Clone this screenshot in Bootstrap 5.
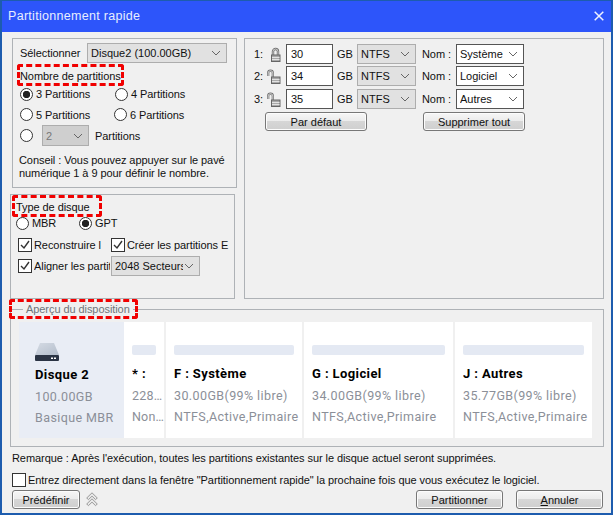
<!DOCTYPE html>
<html lang="fr">
<head>
<meta charset="utf-8">
<title>Partitionnement rapide</title>
<link href="https://cdn.jsdelivr.net/npm/bootstrap@5.3.0/dist/css/bootstrap.min.css" rel="stylesheet">
<style>
html,body{margin:0;background:#f0f0f0;}
body{font-family:"Liberation Sans",sans-serif;font-size:11px;letter-spacing:-.07px;line-height:14px;color:#111;}
.win{width:613px;height:515px;border:2px solid #1d5cae;border-top-width:1px;background:#f0f0f0;overflow:hidden;}
.ttl{height:31px;background:#2d55fa;color:#e8eeff;font-size:12.5px;letter-spacing:.3px;padding:0 7px 2px 6px;flex:none;}
.leftcol{width:235px;flex:none;}
.grp{border:1px solid #aeb2b6;}
.g1{margin:6px 0 0 10px;width:225px;height:150px;padding:4px 0 0 7px;}
.g2{margin:6px 0 0 8px;width:225px;height:105px;padding:5px 0 0 5px;}
.g3{margin:6px 0 0 7px;width:360px;height:261px;padding:5px 0 0 9px;}
.lbl{white-space:nowrap;}
.sl{width:67px;flex:none;}
.callout{position:relative;display:inline-block;}
.callout::after{content:"";position:absolute;border:3px dashed #f00000;border-radius:3px;pointer-events:none;}
.c1::after{inset:-5px -3px -3px -3px;}
.c2::after{inset:-5px -12px -3px -4px;}
.c3::after{inset:-3px -8px -3px -17px;}
.form-select.sel{height:20px;min-height:0;padding:0 16px 0 3px;font-size:inherit;line-height:16px;color:#111;border:1px solid #adadad;border-radius:0;background-color:#e1e1e1;background-position:right 5px center;background-size:10px 6px;background-image:url("data:image/svg+xml,%3csvg xmlns='http://www.w3.org/2000/svg' viewBox='0 0 10 6'%3e%3cpath fill='none' stroke='%23666' d='M1 1l4 4 4-4'/%3e%3c/svg%3e");box-shadow:none;white-space:nowrap;}
.sel.wh{background-color:#fff;border-color:#555;}
.sel.off{background-color:#cfcfcf;color:#777;}
.w140{width:140px;}
.w47{width:47px;height:21px !important;margin-left:6px;margin-right:6px;}
.w89{width:89px;margin-left:1px;}
.w59{width:59px;margin:0 6px 0 0;flex:none;}
.w68{width:68px;margin-left:0;flex:none;}
.nlab{width:34px;flex:none;}
.hd1{margin-top:6px;}
.rrow{display:flex;align-items:center;}
.r1{height:20px;margin-top:1px;}
.r2{height:21px;}
.r3{height:21px;}
.opt{width:95px;}
.opt.tight{width:94px;}
.form-check-input.rad{width:13px;height:13px;margin:0 3px 0 0;flex:none;border:1px solid #333;background-color:#fff;box-shadow:none;background-image:none;float:none;}
.form-check-input.rad:checked{background-color:#fff;border-color:#333;background-image:radial-gradient(circle at center,#222 0,#222 3.4px,#fff 4px);}
.form-check-input.chk{width:14px;height:14px;margin:0 2px 0 0;flex:none;border:1px solid #333;border-radius:0;background-color:#fff;box-shadow:none;float:none;}
.form-check-input.chk:checked{background-color:#fff;border-color:#333;background-size:12px 12px;background-position:center;background-image:url("data:image/svg+xml,%3csvg xmlns='http://www.w3.org/2000/svg' viewBox='0 0 12 12'%3e%3cpath fill='none' stroke='%23333' stroke-width='1.4' d='M2 6l3 3 5-7'/%3e%3c/svg%3e");}
.tip{margin-top:8px;margin-left:-1px;line-height:13px;}
.r-mbr{height:14px;margin-top:2px;}
.mbr{width:63px;}
.r-c1{height:21px;margin-top:4px;padding-left:2px;}
.r-c2{height:21px;padding-left:2px;}
.clip1{width:67px;overflow:hidden;white-space:nowrap;margin-right:10px;flex:none;}
.clip1b{width:76px;overflow:hidden;white-space:nowrap;flex:none;}
.num{width:13px;flex:none;}
.lock{width:17px;height:18px;flex:none;}
.gb{width:20px;flex:none;}
.prow{height:20px;margin-bottom:3px;}
.prow.first{margin-bottom:2px;}
.form-control.inp{height:20px;min-height:0;width:47px;padding:0 4px;margin:0 4px 0 2px;font-size:inherit;line-height:16px;color:#111;border:1px solid #555;border-radius:0;box-shadow:none;flex:none;}
.btn.wbtn{height:19px;padding:0;font-size:inherit;line-height:16px;color:#111;border:1px solid #777;border-radius:3px;background:linear-gradient(#f6f6f6 0,#ececec 45%,#d6d6d6 50%,#cfcfcf 100%);box-shadow:inset 0 0 0 1px #fcfcfc;}
.bd1{width:102px;margin-left:11px;}
.bd2{width:102px;margin-left:56px;}
.apercu{margin:3px 0 0 8px;width:594px;height:145px;border:1px solid #aeb2b6;padding:0 0 0 8px;min-width:0;}
.apercu legend{float:none;width:auto;margin:0 0 0 4px;padding:0 3px;font-size:inherit;line-height:14px;color:#6f7479;}
.pan{height:116px;margin-top:6px;font-family:Roboto,"Noto Sans",sans-serif;font-size:12.5px;letter-spacing:.4px;color:#8b8f98;gap:2px;}
.pp{background:#fff;height:116px;padding:23px 0 0 8px;flex:none;overflow:hidden;}
.pp.dsk{background:#e9edf5;width:105px;padding:21px 0 0 16px;margin-right:-2px;}
.pbar{height:10px;background:#e4e9f3;border-radius:2px;margin-bottom:12px;}
.pp b,.ln{display:block;white-space:nowrap;overflow:hidden;text-overflow:ellipsis;}
.pp b{color:#000;font-weight:700;font-size:13px;height:21px;line-height:14px;}
.ln{height:21px;line-height:16px;}
.pa{width:40px;}.pf{width:136px;}.pg{width:149px;}.pj{width:137px;}
.pa .ln{width:32px;letter-spacing:.2px;}
.ba{width:24px;}.bf{width:120px;}.bg1{width:133px;}.bj{width:121px;}
.dsk svg{display:block;margin-bottom:5px;}
.dsk b{margin-top:7px;}
.rem{margin:4px 0 0 10px;height:14px;}
.chkrow{margin:8px 0 0 10px;height:14px;}
.foot{margin:3px 0 0 10px;height:19px;}
.pd{width:68px;}
.pt{width:87px;margin-left:auto;}
.an{width:87px;margin-left:13px;margin-right:8px;}
.chev{margin-left:6px;}
</style>
</head>
<body>
<div class="win d-flex flex-column">
  <div class="ttl d-flex align-items-center justify-content-between">
    <span>Partitionnement rapide</span>
    <svg width="10" height="10" viewBox="0 0 10 10"><path d="M.7.7l8.6 8.6M9.3.7L.7 9.3" stroke="#eef2ff" stroke-width="1.5" fill="none"/></svg>
  </div>
  <div class="d-flex">
    <div class="leftcol">
      <div class="grp g1">
        <div class="d-flex align-items-center"><span class="lbl sl">Sélectionner</span>
          <select class="form-select sel w140"><option>Disque2 (100.00GB)</option></select></div>
        <div class="hd1"><span class="callout c1 lbl">Nombre de partitions</span></div>
        <div class="rrow r1">
          <label class="d-flex align-items-center opt"><input class="form-check-input rad" type="radio" name="n" checked><span>3 Partitions</span></label>
          <label class="d-flex align-items-center"><input class="form-check-input rad" type="radio" name="n"><span>4 Partitions</span></label>
        </div>
        <div class="rrow r2">
          <label class="d-flex align-items-center opt tight"><input class="form-check-input rad" type="radio" name="n"><span>5 Partitions</span></label>
          <label class="d-flex align-items-center"><input class="form-check-input rad" type="radio" name="n"><span>6 Partitions</span></label>
        </div>
        <div class="rrow r3">
          <input class="form-check-input rad" type="radio" name="n">
          <select class="form-select sel off w47" disabled><option>2</option></select>
          <span>Partitions</span>
        </div>
        <div class="tip">Conseil : Vous pouvez appuyer sur le pavé<br>numérique 1 à 9 pour définir le nombre.</div>
      </div>
      <div class="grp g2">
        <div><span class="callout c2 lbl">Type de disque</span></div>
        <div class="rrow r-mbr">
          <label class="d-flex align-items-center mbr"><input class="form-check-input rad" type="radio" name="t"><span>MBR</span></label>
          <label class="d-flex align-items-center"><input class="form-check-input rad" type="radio" name="t" checked><span>GPT</span></label>
        </div>
        <div class="rrow r-c1">
          <input class="form-check-input chk" type="checkbox" checked><span class="clip1 lbl">Reconstruire les partitions</span>
          <input class="form-check-input chk" type="checkbox" checked><span class="lbl">Créer les partitions E</span>
        </div>
        <div class="rrow r-c2">
          <input class="form-check-input chk" type="checkbox" checked><span class="clip1b lbl">Aligner les partitions sur</span>
          <select class="form-select sel w89"><option>2048 Secteurs</option></select>
        </div>
      </div>
    </div>
    <div class="grp g3">
      <div class="d-flex align-items-center prow first">
        <span class="num">1:</span>
        <svg class="lock" viewBox="0 0 17 18"><path d="M6 10V6.5a2.5 2.5 0 0 1 5 0V10" fill="none" stroke="#6a6a6a" stroke-width="2.4"/><path d="M6 10V6.5a2.5 2.5 0 0 1 5 0V10" fill="none" stroke="#e6e6e6" stroke-width=".8"/><rect x="4.5" y="10" width="8.5" height="6.5" fill="#a9a9a9" stroke="#666"/><path d="M5 12.5h7.5M5 14.5h7.5" stroke="#e2e2e2"/></svg>
        <input class="form-control inp" value="30">
        <span class="gb">GB</span>
        <select class="form-select sel w59"><option>NTFS</option></select>
        <span class="nlab">Nom :</span>
        <select class="form-select sel wh w68"><option>Système</option></select>
      </div>
      <div class="d-flex align-items-center prow">
        <span class="num">2:</span>
        <svg class="lock" viewBox="0 0 17 18"><path d="M1.2 9V6a2.3 2.3 0 0 1 4.6 0v4" fill="none" stroke="#6a6a6a" stroke-width="2.2"/><path d="M1.2 9V6a2.3 2.3 0 0 1 4.6 0v4" fill="none" stroke="#e6e6e6" stroke-width=".8"/><rect x="4.5" y="10" width="8.5" height="6.5" fill="#a9a9a9" stroke="#666"/><path d="M5 12.5h7.5M5 14.5h7.5" stroke="#e2e2e2"/></svg>
        <input class="form-control inp" value="34">
        <span class="gb">GB</span>
        <select class="form-select sel w59"><option>NTFS</option></select>
        <span class="nlab">Nom :</span>
        <select class="form-select sel wh w68"><option>Logiciel</option></select>
      </div>
      <div class="d-flex align-items-center prow">
        <span class="num">3:</span>
        <svg class="lock" viewBox="0 0 17 18"><path d="M1.2 9V6a2.3 2.3 0 0 1 4.6 0v4" fill="none" stroke="#6a6a6a" stroke-width="2.2"/><path d="M1.2 9V6a2.3 2.3 0 0 1 4.6 0v4" fill="none" stroke="#e6e6e6" stroke-width=".8"/><rect x="4.5" y="10" width="8.5" height="6.5" fill="#a9a9a9" stroke="#666"/><path d="M5 12.5h7.5M5 14.5h7.5" stroke="#e2e2e2"/></svg>
        <input class="form-control inp" value="35">
        <span class="gb">GB</span>
        <select class="form-select sel w59"><option>NTFS</option></select>
        <span class="nlab">Nom :</span>
        <select class="form-select sel wh w68"><option>Autres</option></select>
      </div>
      <div class="d-flex">
        <button class="btn wbtn bd1" type="button">Par défaut</button>
        <button class="btn wbtn bd2" type="button">Supprimer tout</button>
      </div>
    </div>
  </div>
  <fieldset class="apercu">
    <legend><span class="callout c3 lbl">Aperçu du disposition</span></legend>
    <div class="d-flex pan">
      <div class="pp dsk">
        <svg width="24" height="18" viewBox="0 0 24 18"><defs><linearGradient id="hd" x1="0" y1="0" x2="1" y2="1"><stop offset="0" stop-color="#d5dbe4"/><stop offset="1" stop-color="#b3bdcb"/></linearGradient></defs><path d="M5 0h14l5 12H0z" fill="url(#hd)"/><rect y="12" width="24" height="6" rx="1" fill="#2b3444"/><rect x="16" y="14.5" width="2" height="1.5" fill="#fff"/><rect x="19" y="14.5" width="2" height="1.5" fill="#fff"/></svg>
        <b>Disque 2</b>
        <span class="ln">100.00GB</span>
        <span class="ln">Basique MBR</span>
      </div>
      <div class="pp pa"><div class="pbar ba"></div><b>* :</b><span class="ln">228.00MB</span><span class="ln">Non alloué</span></div>
      <div class="pp pf"><div class="pbar bf"></div><b>F : Système</b><span class="ln">30.00GB(99% libre)</span><span class="ln">NTFS,Active,Primaire</span></div>
      <div class="pp pg"><div class="pbar bg1"></div><b>G : Logiciel</b><span class="ln">34.00GB(99% libre)</span><span class="ln">NTFS,Active,Primaire</span></div>
      <div class="pp pj"><div class="pbar bj"></div><b>J : Autres</b><span class="ln">35.77GB(99% libre)</span><span class="ln">NTFS,Active,Primaire</span></div>
    </div>
  </fieldset>
  <div class="rem lbl">Remarque : Après l'exécution, toutes les partitions existantes sur le disque actuel seront supprimées.</div>
  <div class="chkrow d-flex align-items-center"><input class="form-check-input chk" type="checkbox"><span class="lbl">Entrez directement dans la fenêtre "Partitionnement rapide" la prochaine fois que vous exécutez le logiciel.</span></div>
  <div class="foot d-flex align-items-center">
    <button class="btn wbtn pd" type="button">Prédéfinir</button>
    <svg class="chev" width="12" height="15" viewBox="0 0 12 15"><path d="M6 .8L11.3 6 9.5 7.6 6 4.2 2.5 7.6.7 6zM6 6.8l5.3 5.2-1.8 1.6L6 10.2l-3.5 3.4L.7 12z" fill="#e8e8e8" stroke="#8f8f8f" stroke-width=".9"/></svg>
    <button class="btn wbtn pt" type="button">Partitionner</button>
    <button class="btn wbtn an" type="button"><u>A</u>nnuler</button>
  </div>
</div>
<script src="https://cdn.jsdelivr.net/npm/bootstrap@5.3.0/dist/js/bootstrap.bundle.min.js"></script>
</body>
</html>
